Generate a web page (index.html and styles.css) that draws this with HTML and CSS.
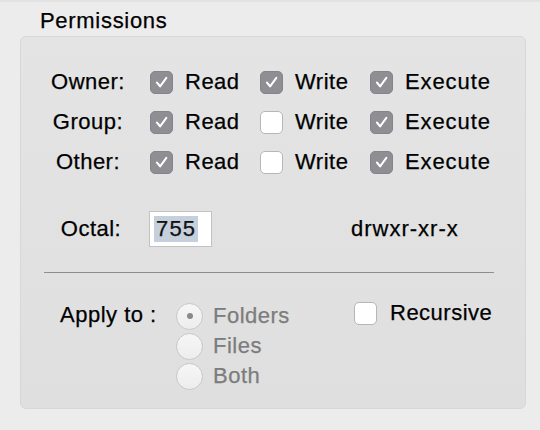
FILE: index.html
```html
<!DOCTYPE html>
<html>
<head>
<meta charset="utf-8">
<link rel="stylesheet" href="styles.css">
</head>
<body>
<div class="title">Permissions</div>
<div class="panel">
  <div class="perm-row">
    <div class="who">Owner:</div>
    <div class="opt"><span class="cb on"><svg viewBox="0 0 23 23"><path d="M6.5 11.5 L10 15.8 L16.8 6.5"/></svg></span><span>Read</span></div>
    <div class="opt"><span class="cb on"><svg viewBox="0 0 23 23"><path d="M6.5 11.5 L10 15.8 L16.8 6.5"/></svg></span><span>Write</span></div>
    <div class="opt"><span class="cb on"><svg viewBox="0 0 23 23"><path d="M6.5 11.5 L10 15.8 L16.8 6.5"/></svg></span><span>Execute</span></div>
  </div>
  <div class="perm-row">
    <div class="who">Group:</div>
    <div class="opt"><span class="cb on"><svg viewBox="0 0 23 23"><path d="M6.5 11.5 L10 15.8 L16.8 6.5"/></svg></span><span>Read</span></div>
    <div class="opt"><span class="cb"></span><span>Write</span></div>
    <div class="opt"><span class="cb on"><svg viewBox="0 0 23 23"><path d="M6.5 11.5 L10 15.8 L16.8 6.5"/></svg></span><span>Execute</span></div>
  </div>
  <div class="perm-row">
    <div class="who">Other:</div>
    <div class="opt"><span class="cb on"><svg viewBox="0 0 23 23"><path d="M6.5 11.5 L10 15.8 L16.8 6.5"/></svg></span><span>Read</span></div>
    <div class="opt"><span class="cb"></span><span>Write</span></div>
    <div class="opt"><span class="cb on"><svg viewBox="0 0 23 23"><path d="M6.5 11.5 L10 15.8 L16.8 6.5"/></svg></span><span>Execute</span></div>
  </div>
  <div class="octal-row">
    <div class="who octal">Octal:</div>
    <div class="field"><span class="sel">755</span></div>
    <div class="mode">drwxr-xr-x</div>
  </div>
  <div class="sep"></div>
  <div class="apply-row">
    <div class="apply-label">Apply to :</div>
    <div class="radios">
      <div class="radio-item"><span class="radio dot"></span><span>Folders</span></div>
      <div class="radio-item"><span class="radio"></span><span>Files</span></div>
      <div class="radio-item"><span class="radio"></span><span>Both</span></div>
    </div>
    <div class="recursive"><span class="cb"></span><span>Recursive</span></div>
  </div>
</div>
</body>
</html>
```
FILE: styles.css
```css
html, body {
  margin: 0;
  padding: 0;
}
body {
  width: 540px;
  height: 430px;
  background: #ececec;
  border-top: 2px solid #e3e3e3;
  box-sizing: border-box;
  font-family: "Liberation Sans", Arial, sans-serif;
  font-size: 22px;
  letter-spacing: 0.5px;
  color: #000;
  -webkit-text-stroke: 0.25px currentColor;
  overflow: hidden;
}
.title {
  height: 26px;
  line-height: 26px;
  padding: 6px 0 0 40px;
  letter-spacing: 0.7px;
}
.panel {
  margin: 2px 14px 0 20px;
  height: 373px;
  box-sizing: border-box;
  background: linear-gradient(#e4e4e4, #dfdfdf);
  border: 1px solid #d7d7d7;
  border-radius: 6px;
  padding-top: 25px;
}
.perm-row {
  display: flex;
  align-items: center;
  height: 40px;
}
.who {
  width: 96px;
  margin-left: 19px;
  margin-right: 14px;
  text-align: center;
  box-sizing: border-box;
}
.opt {
  width: 110px;
  display: flex;
  align-items: center;
  gap: 12px;
}
.opt:last-child {
  letter-spacing: 0.9px;
}
.cb {
  width: 23px;
  height: 23px;
  box-sizing: border-box;
  border-radius: 5px;
  border: 1px solid #b6b6b6;
  background: #fff;
  flex: none;
  display: flex;
}
.cb.on {
  background: #8e8e93;
  border-color: #84848a;
}
.cb svg {
  width: 21px;
  height: 21px;
}
.cb path {
  fill: none;
  stroke: #fff;
  stroke-width: 2.2;
  stroke-linecap: round;
  stroke-linejoin: round;
}
.octal-row {
  display: flex;
  align-items: center;
  height: 36px;
  margin-top: 29px;
}
.who.octal {
  padding-left: 6px;
  margin-right: 13px;
}
.field {
  width: 63px;
  height: 36px;
  box-sizing: border-box;
  background: #fff;
  border: 1px solid #c2c2c2;
  padding: 4px 0 0 4px;
}
.sel {
  display: inline-block;
  background: #c6d0dc;
  color: #111;
  line-height: 26px;
  height: 26px;
  padding: 0 2px 0 2px;
  letter-spacing: 1.2px;
}
.mode {
  margin-left: 139px;
  letter-spacing: 1px;
}
.sep {
  margin: 25px 0 0 23px;
  width: 450px;
  height: 1px;
  background: #8e8e8e;
}
.apply-row {
  display: flex;
  align-items: flex-start;
  margin-top: 28px;
}
.apply-label {
  width: 116px;
  margin-left: 39px;
  line-height: 26px;
  padding-top: 1px;
}
.radios {
  width: 178px;
  display: flex;
  flex-direction: column;
}
.radio-item {
  height: 30px;
  display: flex;
  align-items: center;
  gap: 10px;
  color: #7c7c7c;
}
.radio {
  width: 27px;
  height: 27px;
  box-sizing: border-box;
  border-radius: 50%;
  border: 1px solid #c8c8c8;
  background: linear-gradient(#f6f6f6, #ededed);
  flex: none;
  display: flex;
  align-items: center;
  justify-content: center;
}
.radio.dot::after {
  content: "";
  width: 6px;
  height: 6px;
  border-radius: 50%;
  background: #8a8a8a;
}
.recursive {
  display: flex;
  align-items: center;
  height: 24px;
  gap: 13px;
}
```
